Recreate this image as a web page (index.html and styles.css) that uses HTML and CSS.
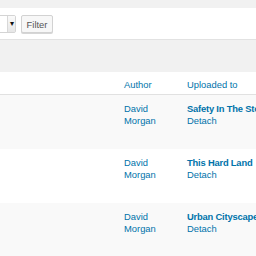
FILE: index.html
```html
<!DOCTYPE html>
<html lang="en">
<head>
  <meta charset="UTF-8" />
  <title>Media Library</title>
  <link rel="stylesheet" href="styles.css">
</head>
<body>
  <div class="filter-bar">
    <div class="select"><span class="select-arrow">&#9662;</span></div>
    <button class="button">Filter</button>
  </div>

  <div class="tablenav"></div>

  <div class="media-table">
    <div class="row head">
      <div class="cell"></div>
      <div class="cell"><a href="#">Author</a></div>
      <div class="cell"><a href="#">Uploaded to</a></div>
    </div>
    <div class="row alt">
      <div class="cell"></div>
      <div class="cell"><a href="#">David<br>Morgan</a></div>
      <div class="cell"><a href="#" class="strong">Safety In The Storm</a><br><a href="#">Detach</a></div>
    </div>
    <div class="row">
      <div class="cell"></div>
      <div class="cell"><a href="#">David<br>Morgan</a></div>
      <div class="cell"><a href="#" class="strong">This Hard Land</a><br><a href="#">Detach</a></div>
    </div>
    <div class="row alt">
      <div class="cell"></div>
      <div class="cell"><a href="#">David<br>Morgan</a></div>
      <div class="cell"><a href="#" class="strong">Urban Cityscape</a><br><a href="#">Detach</a></div>
    </div>
  </div>
</body>
</html>
```

FILE: styles.css
```css
html, body {
  margin: 0;
  padding: 0;
  width: 100%;
  height: 100vh;
  overflow: hidden;
  background: #f1f1f1;
  font-family: "Liberation Sans", Arial, sans-serif;
  font-size: 9.4px;
  line-height: 12px;
  color: #444;
}

body {
  padding-top: 8px;
  box-sizing: border-box;
}

a {
  color: #0073aa;
  text-decoration: none;
}

.strong {
  font-weight: bold;
  letter-spacing: -0.2px;
}

.filter-bar {
  height: 32px;
  box-sizing: border-box;
  background: #fff;
  border-bottom: 1px solid #e2e2e2;
  display: flex;
  align-items: flex-start;
  gap: 5px;
  padding-top: 7px;
}

.select {
  width: 24px;
  height: 18px;
  margin-left: -8px;
  box-sizing: border-box;
  background: #fff;
  border: 1px solid #d4d4d4;
  border-radius: 2px;
  display: flex;
  justify-content: flex-end;
}

.select-arrow {
  width: 7px;
  border-left: 1px solid #d8d8d8;
  background: linear-gradient(#fafafa, #e6e6e6);
  color: #111;
  font-size: 8px;
  line-height: 16px;
  text-align: center;
}

.button {
  height: 18px;
  width: 32px;
  padding: 0;
  box-sizing: border-box;
  background: #f7f7f7;
  border: 1px solid #d2d2d2;
  border-radius: 2px;
  box-shadow: 0 1px 0 #d6d6d6;
  font-family: inherit;
  font-size: 9.4px;
  color: #555;
}

.tablenav {
  height: 32px;
  background: #f1f1f1;
}

.media-table {
  background: #fff;
}

.row {
  display: grid;
  grid-template-columns: 124px 63px 1fr;
  height: 54px;
  box-sizing: border-box;
  padding-top: 8px;
  white-space: nowrap;
}

.row.head {
  height: 23px;
  padding-top: 7px;
  border-bottom: 1px solid #e1e1e1;
}

.row.alt {
  background: #f9f9f9;
}
```
